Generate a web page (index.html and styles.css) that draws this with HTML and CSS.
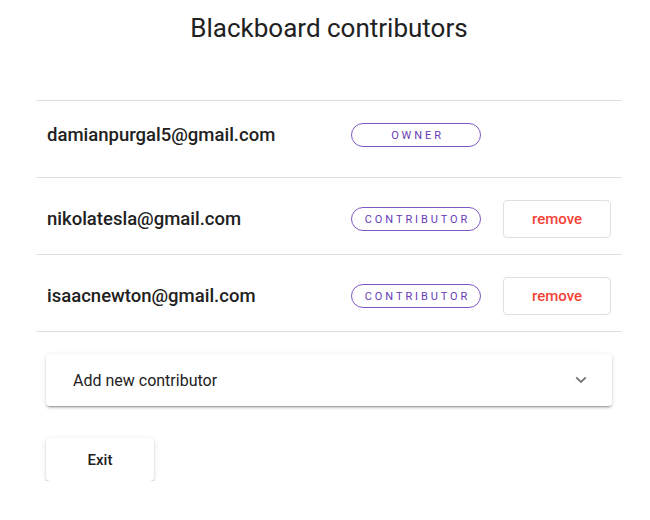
FILE: index.html
```html
<!DOCTYPE html>
<html>
<head>
<meta charset="utf-8">
<link rel="stylesheet" href="styles.css">
</head>
<body>
<div class="page">
  <h1 class="title">Blackboard contributors</h1>
  <div class="list">
    <div class="row">
      <div class="row-inner">
        <span class="email">damianpurgal5@gmail.com</span>
        <span class="chip">OWNER</span>
      </div>
    </div>
    <div class="row">
      <div class="row-inner">
        <span class="email">nikolatesla@gmail.com</span>
        <span class="chip">CONTRIBUTOR</span>
        <button class="remove">remove</button>
      </div>
    </div>
    <div class="row">
      <div class="row-inner">
        <span class="email">isaacnewton@gmail.com</span>
        <span class="chip">CONTRIBUTOR</span>
        <button class="remove">remove</button>
      </div>
    </div>
  </div>
  <div class="panel">
    <span class="panel-title">Add new contributor</span>
    <svg class="chevron" width="12" height="8" viewBox="0 0 12 8"><path d="M1.2 1.4 L6 6 L10.8 1.4" fill="none" stroke="#757575" stroke-width="1.8"/></svg>
  </div>
  <button class="exit">Exit</button>
</div>
</body>
</html>
```
FILE: styles.css
```css
* { box-sizing: border-box; }
body {
  margin: 0;
  background: #fff;
  font-family: Roboto, "Noto Sans", sans-serif;
  color: #212121;
}
.page {
  margin-left: 36px;
  width: 586px;
}
.title {
  margin: 13px 0 0;
  height: 87px;
  font-size: 26px;
  line-height: 30px;
  font-weight: 400;
  text-align: center;
  color: #212121;
}
.list {
  border-top: 1px solid #e0e0e0;
}
.row {
  height: 77px;
  border-bottom: 1px solid #e0e0e0;
  padding: 22px 11px 0;
}
.row-inner {
  display: flex;
  align-items: center;
}
.email {
  width: 304px;
  font-size: 18.5px;
  font-weight: 500;
  line-height: 22px;
  color: #212121;
}
.chip {
  width: 130px;
  height: 24px;
  border: 1px solid #7e57c2;
  border-radius: 12px;
  display: flex;
  align-items: center;
  justify-content: center;
  font-size: 11px;
  font-weight: 400;
  letter-spacing: 2.9px;
  padding-left: 3px;
  color: #673ab7;
}
.remove {
  margin-left: 22px;
  width: 108px;
  height: 38px;
  border: 1px solid #e0e0e0;
  border-radius: 4px;
  background: #fff;
  font-family: Roboto, sans-serif;
  font-size: 15px;
  font-weight: 500;
  color: #f44336;
  padding: 0;
}
.panel {
  margin: 22px 10px 0;
  height: 52px;
  border-radius: 4px;
  background: #fff;
  box-shadow: 0 3px 1px -2px rgba(0,0,0,.2), 0 2px 2px 0 rgba(0,0,0,.14), 0 1px 5px 0 rgba(0,0,0,.12);
  display: flex;
  align-items: center;
  justify-content: space-between;
  padding: 0 25px 0 27px;
}
.panel-title {
  font-size: 16px;
  color: #212121;
}
.chevron { display: block; }
.exit {
  display: block;
  margin: 32px 0 0 10px;
  width: 108px;
  height: 43px;
  border: none;
  border-radius: 4px;
  background: #fff;
  box-shadow: 0 3px 1px -2px rgba(0,0,0,.2), 0 2px 2px 0 rgba(0,0,0,.14), 0 1px 5px 0 rgba(0,0,0,.12);
  font-family: Roboto, sans-serif;
  font-size: 15px;
  font-weight: 500;
  color: #212121;
  padding: 0;
}
```
